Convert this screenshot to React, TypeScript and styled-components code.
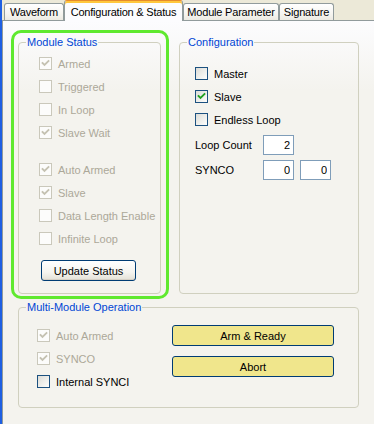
import React from 'react';
import styled, { createGlobalStyle } from 'styled-components';

const Global = createGlobalStyle`
  html, body { margin: 0; padding: 0; }
  body {
    font-family: "Liberation Sans", Arial, sans-serif;
    font-size: 11px;
    background: #f4f3ee;
  }
  #root { width: 374px; height: 424px; overflow: hidden; }
`;

const Window = styled.div`
  display: flex;
  width: 374px;
  height: 424px;
  background: #ece9d8;
`;

const BlueEdge = styled.div`
  flex: none;
  width: 2px;
  background: #1e5fe2;
`;

const Main = styled.div`
  flex: 1;
  min-width: 0;
  display: flex;
  flex-direction: column;
`;

const TabStrip = styled.div`
  position: relative;
  z-index: 1;
  display: flex;
  align-items: flex-end;
  height: 20px;
  padding-left: 2px;
`;

const Tab = styled.div<{ $active?: boolean; $w: number }>`
  box-sizing: border-box;
  flex: none;
  width: ${(p) => p.$w}px;
  height: ${(p) => (p.$active ? 21 : 17)}px;
  margin-bottom: ${(p) => (p.$active ? -1 : 0)}px;
  display: flex;
  align-items: center;
  justify-content: center;
  padding-top: ${(p) => (p.$active ? 1 : 0)}px;
  border: 1px solid #919b9c;
  border-bottom: none;
  border-top-color: ${(p) => (p.$active ? '#e68b2c' : '#919b9c')};
  border-radius: 3px 3px 0 0;
  background: ${(p) =>
    p.$active ? '#fcfcfe' : 'linear-gradient(#ffffff, #f6f5f1 60%, #eceae2)'};
  box-shadow: ${(p) => (p.$active ? 'inset 0 2px 0 #ffc73c' : 'none')};
  color: #000;
  white-space: nowrap;
  letter-spacing: -0.2px;
`;

const Page = styled.div`
  flex: 1;
  display: flex;
  flex-direction: column;
  align-items: flex-start;
  padding: 9px 0 0 8px;
  border-left: 1px solid #919b9c;
  border-top: 1px solid #919b9c;
  background: linear-gradient(#fcfcfe, #f4f3ee 70px, #f4f3ee);
`;

const TopRow = styled.div`
  display: flex;
  align-items: flex-start;
  gap: 10px;
`;

const Highlight = styled.div`
  box-sizing: border-box;
  width: 158px;
  height: 269px;
  padding: 3px 0 0 4px;
  border: 3px solid #5fe92f;
  border-radius: 10px;
`;

const Group = styled.fieldset<{ $w: number; $h: number; $mt?: number; $ml?: number }>`
  box-sizing: border-box;
  min-width: 0;
  width: ${(p) => p.$w}px;
  height: ${(p) => p.$h}px;
  margin: ${(p) => p.$mt ?? 0}px 0 0 ${(p) => p.$ml ?? 0}px;
  padding: 0;
  border: 1px solid #d0d0bf;
  border-radius: 4px;
`;

const Legend = styled.legend`
  margin-left: 7px;
  padding: 0 1px;
  color: #0046d5;
  font-size: 11px;
  line-height: 13px;
`;

const GroupBody = styled.div<{ $pt: number; $pl: number; $row?: boolean }>`
  display: flex;
  flex-direction: ${(p) => (p.$row ? 'row' : 'column')};
  align-items: flex-start;
  padding: ${(p) => p.$pt}px 0 0 ${(p) => p.$pl}px;
`;

const Row = styled.div`
  display: flex;
  align-items: center;
  gap: 6px;
  height: 23px;
`;

const Label = styled.span<{ $disabled?: boolean }>`
  color: ${(p) => (p.$disabled ? '#aca899' : '#000')};
  white-space: nowrap;
`;

const Box = styled.span<{ $disabled?: boolean }>`
  box-sizing: border-box;
  flex: none;
  display: flex;
  width: 13px;
  height: 13px;
  border: 1px solid ${(p) => (p.$disabled ? '#cac8bb' : '#1c5180')};
  background: ${(p) =>
    p.$disabled ? '#fcfcfb' : 'linear-gradient(135deg, #dcdcd7, #f4f4f1 70%, #fdfdfc)'};
`;

const Spacer = styled.div<{ $h: number }>`
  height: ${(p) => p.$h}px;
`;

const Button = styled.button<{ $w: number; $yellow?: boolean; $mt?: number; $ml?: number }>`
  box-sizing: border-box;
  width: ${(p) => p.$w}px;
  height: 21px;
  margin: ${(p) => p.$mt ?? 0}px 0 0 ${(p) => p.$ml ?? 0}px;
  padding: 0;
  font-family: inherit;
  font-size: 11px;
  color: #000;
  border: 1px solid #003c74;
  border-radius: 3px;
  background: ${(p) =>
    p.$yellow ? '#f0e68c' : 'linear-gradient(#ffffff, #f5f4ef 60%, #e3e0d6)'};
  box-shadow: ${(p) => (p.$yellow ? 'none' : 'inset 0 -1px 0 #d6d0c5')};
`;

const FieldRow = styled.div<{ $mt: number }>`
  display: flex;
  align-items: center;
  gap: 6px;
  height: 20px;
  margin-top: ${(p) => p.$mt}px;
`;

const FieldLabel = styled.span`
  width: 62px;
  white-space: nowrap;
`;

const Field = styled.input`
  box-sizing: border-box;
  width: 31px;
  height: 20px;
  margin: 0;
  padding: 0 3px 0 0;
  border: 1px solid #7f9db9;
  background: #fff;
  font-family: inherit;
  font-size: 11px;
  text-align: right;
  color: #000;
  outline: none;
`;

const LeftCol = styled.div`
  width: 135px;
  display: flex;
  flex-direction: column;
  margin-top: -1px;
`;

const RightCol = styled.div`
  display: flex;
  flex-direction: column;
  gap: 10px;
`;

function Check({ checked, disabled, label }: { checked?: boolean; disabled?: boolean; label: string }) {
  return (
    <Row>
      <Box $disabled={disabled}>
        {checked && (
          <svg width="11" height="11" viewBox="0 0 11 11">
            <path
              d="M2.5 5 L4.5 7 L8.5 3"
              fill="none"
              stroke={disabled ? '#c5c2b2' : '#21a121'}
              strokeWidth="1.8"
              strokeLinecap="square"
            />
          </svg>
        )}
      </Box>
      <Label $disabled={disabled}>{label}</Label>
    </Row>
  );
}

export default function App() {
  return (
    <>
      <Global />
      <Window>
        <BlueEdge />
        <Main>
          <TabStrip>
            <Tab $w={60}>Waveform</Tab>
            <Tab $w={119} $active>
              Configuration &amp; Status
            </Tab>
            <Tab $w={96}>Module Parameter</Tab>
            <Tab $w={55}>Signature</Tab>
          </TabStrip>
          <Page>
            <TopRow>
              <Highlight>
                <Group $w={143} $h={258}>
                  <Legend>Module Status</Legend>
                  <GroupBody $pt={3} $pl={20}>
                    <Check disabled checked label="Armed" />
                    <Check disabled label="Triggered" />
                    <Check disabled label="In Loop" />
                    <Check disabled checked label="Slave Wait" />
                    <Spacer $h={14} />
                    <Check disabled checked label="Auto Armed" />
                    <Check disabled checked label="Slave" />
                    <Check disabled label="Data Length Enable" />
                    <Check disabled label="Infinite Loop" />
                    <Button $w={95} $mt={10} $ml={2}>
                      Update Status
                    </Button>
                  </GroupBody>
                </Group>
              </Highlight>
              <Group $w={180} $h={258} $mt={6}>
                <Legend>Configuration</Legend>
                <GroupBody $pt={13} $pl={15}>
                  <Check label="Master" />
                  <Check checked label="Slave" />
                  <Check label="Endless Loop" />
                  <FieldRow $mt={4}>
                    <FieldLabel>Loop Count</FieldLabel>
                    <Field defaultValue="2" readOnly />
                  </FieldRow>
                  <FieldRow $mt={5}>
                    <FieldLabel>SYNCO</FieldLabel>
                    <Field defaultValue="0" readOnly />
                    <Field defaultValue="0" readOnly />
                  </FieldRow>
                </GroupBody>
              </Group>
            </TopRow>
            <Group $w={341} $h={107} $mt={2} $ml={7}>
              <Legend>Multi-Module Operation</Legend>
              <GroupBody $pt={11} $pl={18} $row>
                <LeftCol>
                  <Check disabled checked label="Auto Armed" />
                  <Check disabled checked label="SYNCO" />
                  <Check label="Internal SYNCI" />
                </LeftCol>
                <RightCol>
                  <Button $w={162} $yellow>
                    Arm &amp; Ready
                  </Button>
                  <Button $w={162} $yellow>
                    Abort
                  </Button>
                </RightCol>
              </GroupBody>
            </Group>
          </Page>
        </Main>
      </Window>
    </>
  );
}
